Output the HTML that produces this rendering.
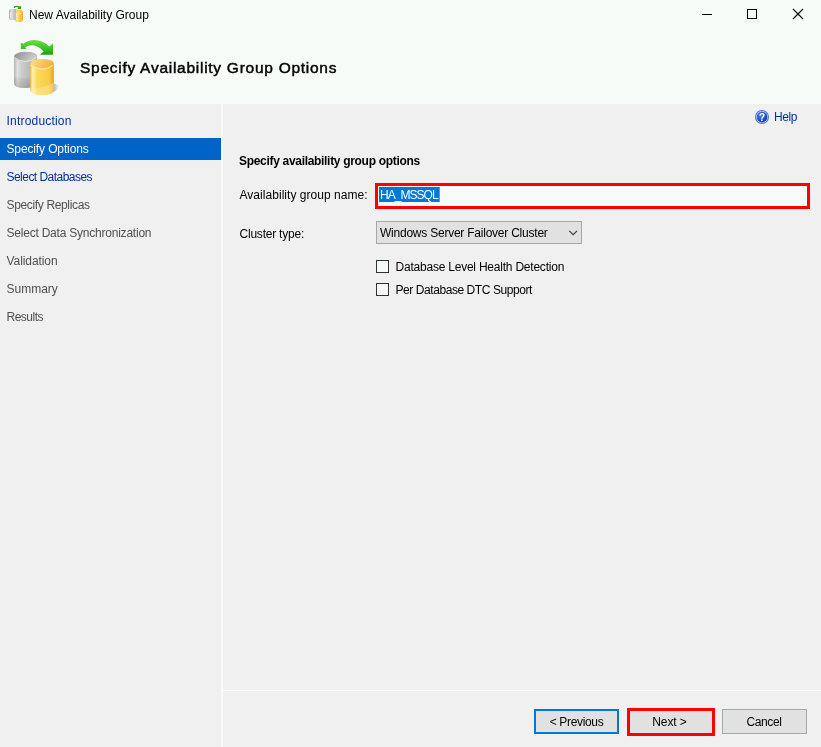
<!DOCTYPE html>
<html lang="en">
<head>
<meta charset="utf-8">
<title>New Availability Group</title>
<style>
html,body{margin:0;padding:0;}
body{width:821px;height:747px;overflow:hidden;position:relative;background:#f0f0f0;
  font-family:"Liberation Sans",sans-serif;font-size:12px;color:#000;}
.abs{position:absolute;}
.t{position:absolute;white-space:nowrap;line-height:16px;}
#header{left:0;top:0;width:821px;height:104px;background:#f7fbf8;}
#divider{left:221px;top:104px;width:2px;height:643px;background:#f7fbf8;}
.nav{left:6.5px;color:#505050;}
.nav.link{color:#0033a0;}
#sel{left:0;top:138px;width:221px;height:22px;background:#0063c8;}
.btn{position:absolute;box-sizing:border-box;background:#e1e1e1;border:1px solid #a3a9a5;height:25px;width:85px;top:709px;}
.btn span{position:absolute;left:0;right:0;top:4px;text-align:center;line-height:16px;}
.chk{position:absolute;box-sizing:border-box;width:13px;height:13px;border:1px solid #333;background:#f7fbf8;}
</style>
</head>
<body>
<div id="root" style="position:absolute;left:0;top:0;width:821px;height:747px;will-change:transform;">
<div id="header" class="abs"></div>

<!-- title bar -->
<svg class="abs" style="left:8px;top:6px;overflow:visible" width="16" height="16" viewBox="0 0 16 16">
  <defs>
    <linearGradient id="sg" x1="0" x2="1" y1="0" y2="0"><stop offset="0" stop-color="#a8a8a8"/><stop offset="0.35" stop-color="#e2e2e2"/><stop offset="1" stop-color="#9c9c9c"/></linearGradient>
    <linearGradient id="sy" x1="0" x2="1" y1="0" y2="0"><stop offset="0" stop-color="#f3b63a"/><stop offset="0.3" stop-color="#fde27a"/><stop offset="1" stop-color="#f0a92a"/></linearGradient>
  </defs>
  <rect x="1" y="3" width="8" height="11" rx="2.2" fill="url(#sg)"/>
  <path d="M2.6 6 V12" stroke="#f4f4f4" stroke-width="0.9" fill="none"/>
  <rect x="7" y="4" width="8" height="12" rx="2.4" fill="url(#sy)"/>
  <path d="M8.2 7.2 Q11 8.6 13.8 7.2" stroke="#fff6d0" stroke-width="1" fill="none"/>
  <path d="M8.6 7.6 V14" stroke="#fff1b8" stroke-width="0.9" fill="none"/>
  <path d="M5.8 -0.3 L5.8 1.9 L7.5 1.9 L7.1 1.2 Q9 0.5 10.5 1.6 L9.7 3 L13 3 L13 -0.2 L12.2 0.5 Q9.5 -0.9 6.6 0.3 Z" fill="#2aa61a"/>
</svg>
<span class="t" id="wtitle" style="left:29px;top:7px;">New Availability Group</span>
<svg class="abs" style="left:696px;top:4px" width="115" height="22" viewBox="0 0 115 22" fill="none" stroke="#000" stroke-width="1">
  <path d="M6 10.5 H16"/>
  <rect x="51.5" y="5.5" width="9" height="9"/>
  <path d="M97 5 L107 15 M107 5 L97 15" stroke-width="1.1"/>
</svg>

<!-- header icon -->
<svg class="abs" style="left:10px;top:34px" width="56" height="66" viewBox="0 0 56 66">
  <defs>
    <linearGradient id="gg" x1="0" x2="1" y1="0" y2="0">
      <stop offset="0" stop-color="#b4b4b4"/><stop offset="0.14" stop-color="#e0e0e0"/><stop offset="0.32" stop-color="#cdcdcd"/><stop offset="1" stop-color="#a8a8a8"/>
    </linearGradient>
    <linearGradient id="gt" x1="0" x2="1" y1="0" y2="0.4">
      <stop offset="0" stop-color="#8c8c8c"/><stop offset="1" stop-color="#cdcdcd"/>
    </linearGradient>
    <linearGradient id="gb" x1="0" x2="0" y1="0" y2="1">
      <stop offset="0" stop-color="#000" stop-opacity="0"/><stop offset="1" stop-color="#000" stop-opacity="0.16"/>
    </linearGradient>
    <linearGradient id="yg" x1="0" x2="1" y1="0" y2="0">
      <stop offset="0" stop-color="#f6c14a"/><stop offset="0.1" stop-color="#fff0b0"/><stop offset="0.3" stop-color="#fcd858"/><stop offset="0.8" stop-color="#fbcb45"/><stop offset="1" stop-color="#ee9f28"/>
    </linearGradient>
    <linearGradient id="yt" x1="0" x2="1" y1="0" y2="0.3">
      <stop offset="0" stop-color="#fde08a"/><stop offset="1" stop-color="#f3b23a"/>
    </linearGradient>
    <linearGradient id="ag" x1="0" x2="0" y1="0" y2="1">
      <stop offset="0" stop-color="#6fdc48"/><stop offset="0.5" stop-color="#3fc525"/><stop offset="1" stop-color="#1f9d12"/>
    </linearGradient>
    <linearGradient id="sh" x1="0" x2="1" y1="0" y2="0">
      <stop offset="0" stop-color="#8a8a8a" stop-opacity="0.75"/><stop offset="1" stop-color="#c8c8c8" stop-opacity="0"/>
    </linearGradient>
  </defs>
  <path d="M43 49 L50 52 Q49 56 43 58 Z" fill="url(#sh)"/>
  <path d="M4 22.5 Q4 17.7 15.5 17.7 Q27 17.7 27 22.5 V49.5 Q27 54 15.5 54 Q4 54 4 49.5 Z" fill="url(#gg)"/>
  <path d="M4 42 Q15 47 27 40 V49.5 Q27 54 15.5 54 Q4 54 4 49.5 Z" fill="url(#gb)"/>
  <ellipse cx="15.5" cy="22.6" rx="11.2" ry="4.7" fill="url(#gt)"/>
  <path d="M4.3 23.5 Q15.5 31.5 26.7 23.5" stroke="#e6e6e6" stroke-width="0.9" fill="none"/>
  <path d="M20.3 30 Q20.3 25 32.1 25 Q43.9 25 43.9 30 V56.3 Q43.9 61 32.1 61 Q20.3 61 20.3 56.3 Z" fill="url(#yg)"/>
  <path d="M20.3 55 Q33 54.5 43.9 48.5 V56.3 Q43.9 61 32.1 61 Q20.3 61 20.3 56.3 Z" fill="#fff3c0" fill-opacity="0.35"/>
  <ellipse cx="32.1" cy="30" rx="11.5" ry="4.8" fill="url(#yt)"/>
  <path d="M20.6 31 Q32.1 39.2 43.6 31" stroke="#fff3c4" stroke-width="0.9" fill="none"/>
  <path d="M10.8 8.4 L10.8 15 L16.3 15 L15.2 13.4 C19.5 10.2 27 10 33.6 17.4 L30 20.8 L43 20.8 L43 9.3 L39.2 12.6 C31 4.6 20 4.4 13.6 9.8 Z" fill="url(#ag)"/>
</svg>
<span class="t" id="htitle" style="left:80px;top:58px;font-size:15.5px;line-height:20px;font-weight:normal;-webkit-text-stroke:0.45px #000;letter-spacing:0.73px;">Specify Availability Group Options</span>

<!-- sidebar -->
<div id="divider" class="abs"></div>
<div id="sel" class="abs"></div>
<span class="t nav link" style="top:113px;letter-spacing:0.2px;">Introduction</span>
<span class="t nav" style="top:141px;color:#fff;letter-spacing:-0.13px;">Specify Options</span>
<span class="t nav link" style="top:169px;letter-spacing:-0.53px;">Select Databases</span>
<span class="t nav" style="top:197px;letter-spacing:-0.35px;">Specify Replicas</span>
<span class="t nav" style="top:225px;letter-spacing:-0.22px;">Select Data Synchronization</span>
<span class="t nav" style="top:253px;letter-spacing:-0.08px;">Validation</span>
<span class="t nav" style="top:281px;">Summary</span>
<span class="t nav" style="top:309px;letter-spacing:-0.5px;">Results</span>

<!-- help -->
<svg class="abs" style="left:754px;top:109px" width="16" height="16" viewBox="0 0 16 16">
  <defs><radialGradient id="hg" cx="0.35" cy="0.3" r="0.85"><stop offset="0" stop-color="#4f86f2"/><stop offset="0.6" stop-color="#1f4fd0"/><stop offset="1" stop-color="#0a2c9a"/></radialGradient></defs>
  <circle cx="8" cy="8" r="7" fill="#4a72d4"/>
  <circle cx="8" cy="8" r="5.9" fill="#eef3ff"/>
  <circle cx="8" cy="8" r="5.4" fill="url(#hg)"/>
  <text x="8" y="11.5" text-anchor="middle" font-family="Liberation Sans, sans-serif" font-weight="bold" font-size="10" fill="#fff">?</text>
</svg>
<span class="t" id="help" style="left:774px;top:109px;color:#0033a0;letter-spacing:-0.4px;">Help</span>

<!-- form -->
<span class="t" id="sect" style="left:239px;top:153px;font-weight:bold;letter-spacing:-0.31px;">Specify availability group options</span>
<span class="t" id="lbl1" style="left:239.5px;top:187px;letter-spacing:0.04px;">Availability group name:</span>
<div class="abs" style="left:375px;top:183px;width:435px;height:26px;box-sizing:border-box;border:3px solid #f00;background:#f7fbf8;"></div>
<div class="abs" style="left:379px;top:187px;width:60px;height:15px;background:#0078d7;"></div>
<div class="abs" style="left:439px;top:187px;width:1px;height:15px;background:#e87a1d;"></div>
<span class="t" id="inp" style="left:380px;top:187px;color:#fff;letter-spacing:-0.96px;">HA_MSSQL</span>

<span class="t" id="lbl2" style="left:239.5px;top:226px;letter-spacing:-0.22px;">Cluster type:</span>
<div class="abs" style="left:376px;top:221px;width:206px;height:23px;box-sizing:border-box;border:1px solid #a3a9a5;background:#e1e1e1;"></div>
<span class="t" id="dd" style="left:380px;top:225px;letter-spacing:-0.23px;">Windows Server Failover Cluster</span>
<svg class="abs" style="left:567px;top:228px" width="12" height="10" viewBox="0 0 12 10" fill="none" stroke="#3c3c3c" stroke-width="1.25"><path d="M2.3 2.9 L6.15 6.7 L10 2.9"/></svg>

<div class="chk" style="left:376px;top:260px;"></div>
<span class="t" id="c1" style="left:395.5px;top:259px;letter-spacing:-0.22px;">Database Level Health Detection</span>
<div class="chk" style="left:376px;top:283px;"></div>
<span class="t" id="c2" style="left:395.5px;top:282px;letter-spacing:-0.43px;">Per Database DTC Support</span>

<!-- footer -->
<div class="abs" style="left:223px;top:690px;width:598px;height:1px;background:#fafcfa;"></div>
<div class="btn" style="left:534px;border:2px solid #0078d7;"><span style="top:3px;left:-1px;right:-1px;"><b class="t" style="position:static;font-weight:normal;letter-spacing:-0.33px;">&lt; Previous</b></span></div>
<div class="btn" style="left:628px;"><span><b class="t" style="position:static;font-weight:normal;letter-spacing:-0.1px;margin-left:-2px;">Next &gt;</b></span></div>
<div class="abs" style="left:627px;top:708px;width:88px;height:28px;box-sizing:border-box;border:3px solid #f00;"></div>
<div class="btn" style="left:722px;"><span><b class="t" style="position:static;font-weight:normal;letter-spacing:-0.42px;margin-left:-1px;">Cancel</b></span></div>
</div>
</body>
</html>
